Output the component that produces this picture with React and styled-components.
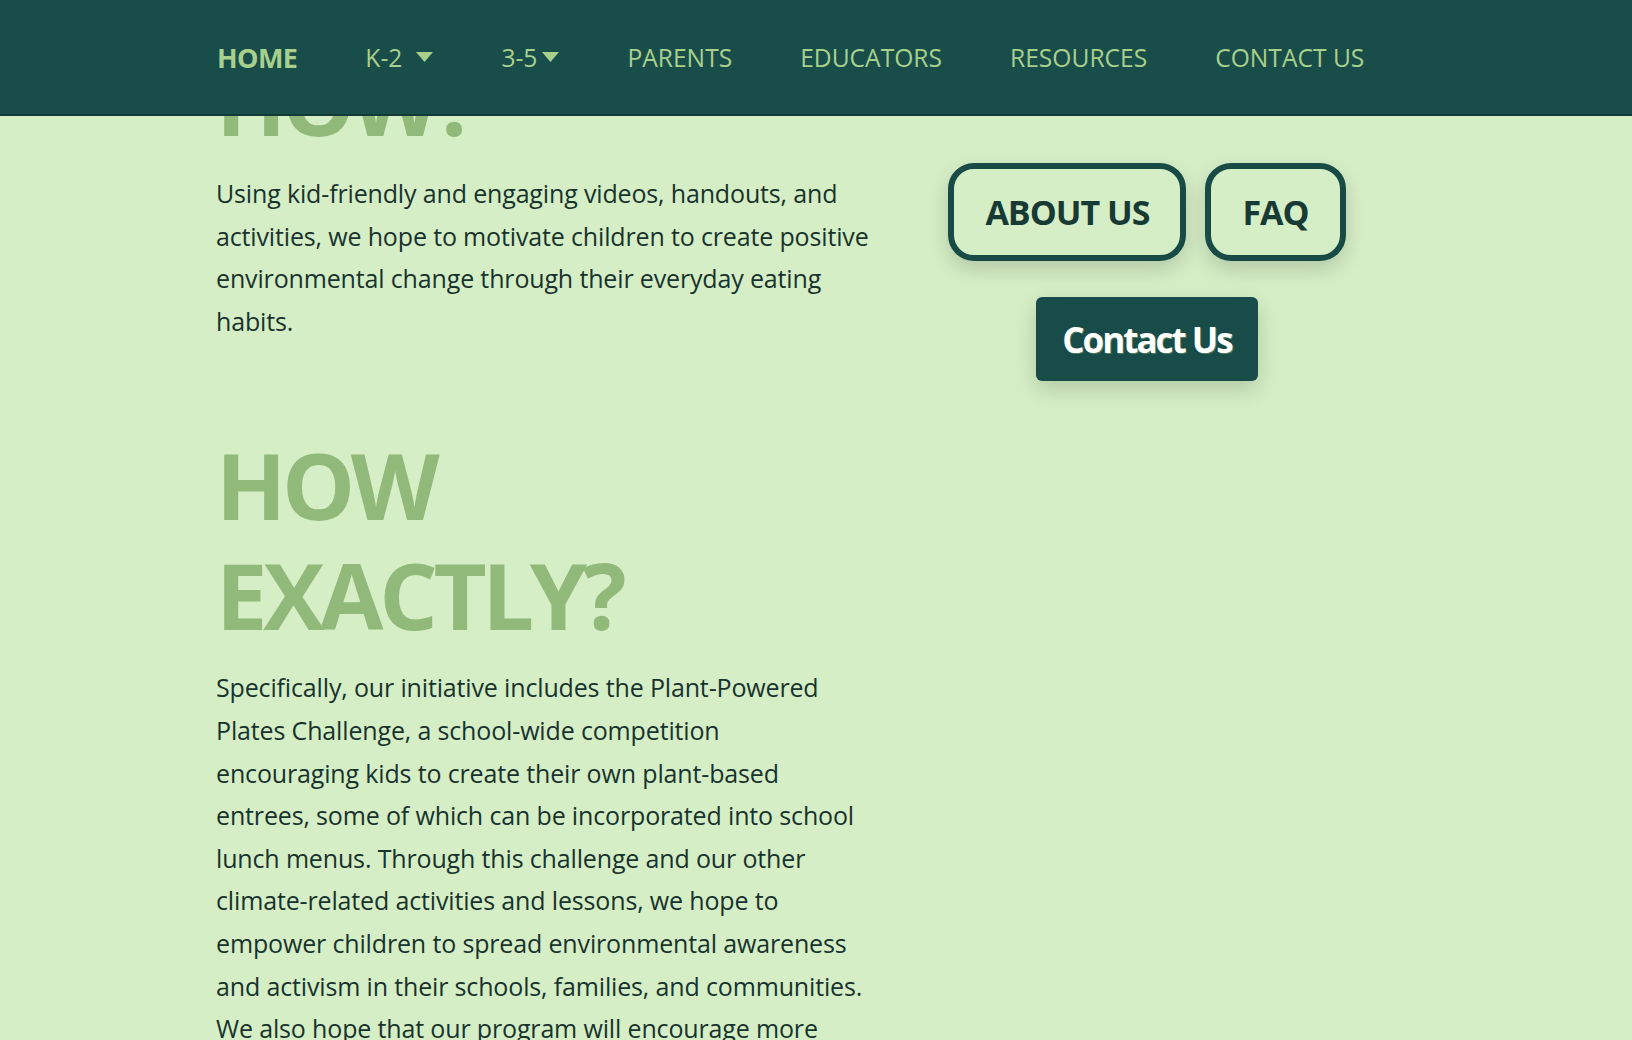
import React from 'react'
import styled, { createGlobalStyle } from 'styled-components'

const GlobalStyle = createGlobalStyle`
html, body {
  margin: 0;
  padding: 0;
  overflow: hidden;
}
body {
  background: #d5eec6;
  font-family: "Open Sans", "Noto Sans", sans-serif;
  color: #18332d;
}
`;

const Nav = styled.nav`
position: fixed;
top: 0;
left: 0;
right: 0;
height: 116px;
box-sizing: border-box;
background: #194d49;
border-bottom: 2px solid #113b37;
display: flex;
justify-content: center;
z-index: 10;
`;

const NavItems = styled.ul`
width: 1200px;
margin: 0;
padding: 0 0 0 2px;
list-style: none;
display: flex;
align-items: center;
gap: 68px;
`;

const NavLink = styled.a`
display: flex;
align-items: center;
gap: ${({ $gap }) => $gap}px;
color: #a8d08d;
text-decoration: none;
font-size: ${({ $active }) => ($active ? 27 : 24.6)}px;
font-weight: ${({ $active }) => ($active ? 700 : 400)};
letter-spacing: ${({ $active }) => ($active ? -0.6 : 0)}px;
cursor: pointer;
`;

const Caret = () => (
  <svg width="17" height="10" viewBox="0 0 17 10">
    <polygon points="0,0 17,0 8.5,10" fill="#a8d08d" />
  </svg>
);

const Page = styled.main`
width: 1200px;
margin: 0 auto;
padding-top: 46px;
display: grid;
grid-template-columns: 662px 1fr;
`;

const TextColumn = styled.div``;

const Heading = styled.h2`
margin: 0 0 16px;
font-size: 92px;
line-height: 110px;
font-weight: 700;
color: #90b97a;
letter-spacing: -4.4px;
`;

const Body = styled.p`
margin: 0 0 88px;
font-size: 25px;
line-height: 42.6px;
letter-spacing: -0.15px;
white-space: nowrap;
`;

const Actions = styled.div`
display: flex;
flex-direction: column;
align-items: center;
gap: 36px;
padding-top: 117px;
`;

const ButtonRow = styled.div`
display: flex;
gap: 19px;
`;

const OutlineButton = styled.a`
box-sizing: border-box;
height: 98px;
padding: 0 31px;
border: 6px solid #184a46;
border-radius: 26px;
display: flex;
align-items: center;
font-size: 34px;
font-weight: 700;
color: #173a35;
letter-spacing: -1px;
text-decoration: none;
box-shadow: 0 8px 20px rgba(0, 0, 0, 0.16);
cursor: pointer;
`;

const SolidButton = styled.a`
box-sizing: border-box;
width: 222px;
height: 84px;
border-radius: 6px;
background: #184c49;
color: #ffffff;
display: flex;
align-items: center;
justify-content: center;
font-size: 35px;
font-weight: 700;
letter-spacing: -2px;
text-decoration: none;
text-shadow: 1px 1px 0 rgba(190, 220, 150, 0.35);
box-shadow: 0 8px 22px rgba(0, 0, 0, 0.16);
cursor: pointer;
`;

const links = [
  { label: 'HOME', active: true },
  { label: 'K-2', caret: true, gap: 14 },
  { label: '3-5', caret: true, gap: 5 },
  { label: 'PARENTS' },
  { label: 'EDUCATORS' },
  { label: 'RESOURCES' },
  { label: 'CONTACT US' },
];

const intro = [
  'Using kid-friendly and engaging videos, handouts, and',
  'activities, we hope to motivate children to create positive',
  'environmental change through their everyday eating',
  'habits.',
];

const detail = [
  'Specifically, our initiative includes the Plant-Powered',
  'Plates Challenge, a school-wide competition',
  'encouraging kids to create their own plant-based',
  'entrees, some of which can be incorporated into school',
  'lunch menus. Through this challenge and our other',
  'climate-related activities and lessons, we hope to',
  'empower children to spread environmental awareness',
  'and activism in their schools, families, and communities.',
  'We also hope that our program will encourage more',
];

const Lines = ({ lines }) =>
  lines.map((line, i) => (
    <React.Fragment key={i}>
      {line}
      {i < lines.length - 1 && <br />}
    </React.Fragment>
  ));

export default function App() {
  return (
    <>
      <GlobalStyle />
      <Nav>
        <NavItems>
          {links.map((l) => (
            <li key={l.label}>
              <NavLink $active={l.active} $gap={l.gap || 0}>
                {l.label}
                {l.caret && <Caret />}
              </NavLink>
            </li>
          ))}
        </NavItems>
      </Nav>
      <Page>
        <TextColumn>
          <Heading>HOW?</Heading>
          <Body><Lines lines={intro} /></Body>
          <Heading>HOW<br />EXACTLY?</Heading>
          <Body><Lines lines={detail} /></Body>
        </TextColumn>
        <Actions>
          <ButtonRow>
            <OutlineButton>ABOUT US</OutlineButton>
            <OutlineButton>FAQ</OutlineButton>
          </ButtonRow>
          <SolidButton>Contact Us</SolidButton>
        </Actions>
      </Page>
    </>
  )
}
